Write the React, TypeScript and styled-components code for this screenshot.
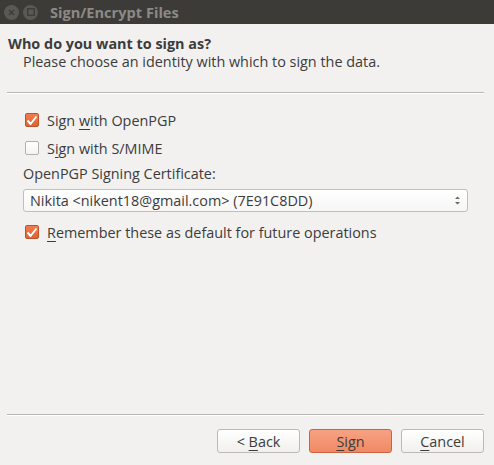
import React, { useState } from "react";
import styled, { createGlobalStyle } from "styled-components";

const GlobalStyle = createGlobalStyle`
	html, body {
		margin: 0;
		padding: 0;
		background: #f2f1f0;
	}
	body {
		font-family: "Open Sans", "DejaVu Sans", sans-serif;
		font-size: 14.4px;
		color: #3c3c3c;
	}
`;

const Window = styled.div`
	width: 494px;
	height: 465px;
	display: flex;
	flex-direction: column;
	background: #f2f1f0;
	overflow: hidden;
`;

const TitleBar = styled.div`
	height: 24px;
	flex: none;
	display: flex;
	align-items: center;
	gap: 4px;
	padding-left: 4px;
	background: #3c3b37;
`;

const WinButton = styled.div`
	width: 15px;
	height: 15px;
	border-radius: 50%;
	background: #5a5955;
	display: flex;
	align-items: center;
	justify-content: center;
`;

const Title = styled.div`
	margin-left: 8px;
	font-weight: bold;
	font-size: 14.6px;
	color: #8c8a85;
`;

const Header = styled.div`
	padding: 11px 8px 0 8px;
	height: 58px;
	box-sizing: border-box;
`;

const Heading = styled.div`
	font-weight: bold;
	line-height: 18px;
`;

const SubHeading = styled.div`
	padding-left: 15px;
	line-height: 18px;
`;

const Separator = styled.div`
	margin: ${(p: { top: number }) => p.top}px 10px 0 7px;
	height: 1px;
	background: #b9b7b3;
	border-bottom: 1px solid #ffffff;
	flex: none;
`;

const Body = styled.div`
	flex: 1;
	padding: 12px 26px 0 23px;
	display: flex;
	flex-direction: column;
`;

const CheckRow = styled.label`
	display: flex;
	align-items: center;
	gap: 8px;
	height: 28px;
	padding-left: 2px;
`;

const Box = styled.span<{ checked: boolean }>`
	width: 14px;
	height: 14px;
	box-sizing: border-box;
	border-radius: 2px;
	display: flex;
	align-items: center;
	justify-content: center;
	border: 1px solid ${p => (p.checked ? "#b8532e" : "#b4b1ac")};
	background: ${p => (p.checked ? "linear-gradient(#f27d4e, #e3622f)" : "linear-gradient(#ffffff, #f4f3f1)")};
`;

const Mn = styled.span`
	text-decoration: underline;
	text-underline-offset: 3px;
	text-decoration-thickness: 1px;
`;

const FieldLabel = styled.div`
	height: 25px;
	line-height: 22px;
	margin-top: 1px;
`;

const Combo = styled.div`
	height: 23px;
	margin-top: 1px;
	margin-bottom: 6px;
	box-sizing: border-box;
	display: flex;
	align-items: center;
	justify-content: space-between;
	padding: 0 6px 0 6px;
	border: 1px solid #c2beb8;
	border-radius: 3px;
	background: linear-gradient(#ffffff, #f7f6f5);
`;

const Spacer = styled.div`
	flex: 1;
`;

const Footer = styled.div`
	display: flex;
	justify-content: flex-end;
	gap: 9px;
	padding: 13px 10px 12px 0;
`;

const Button = styled.button<{ primary?: boolean }>`
	width: 83px;
	height: 24px;
	box-sizing: border-box;
	font-family: inherit;
	font-size: 14.4px;
	color: #3c3c3c;
	border-radius: 3px;
	border: 1px solid ${p => (p.primary ? "#c9643f" : "#bdb9b3")};
	background: ${p => (p.primary ? "linear-gradient(#f7a282, #f08965)" : "linear-gradient(#ffffff, #f1f0ee)")};
	padding: 0;
`;

const Check = () => (
	<svg width="12" height="11" viewBox="0 0 12 11">
		<path d="M1.5 5.5 L4.5 9 L10.5 1.5" fill="none" stroke="#ffffff" strokeWidth="2" />
	</svg>
);

const CheckBox = ({ checked, onClick, children }: { checked: boolean; onClick: () => void; children: React.ReactNode }) => (
	<CheckRow onClick={onClick}>
		<Box checked={checked}>{checked && <Check />}</Box>
		<span>{children}</span>
	</CheckRow>
);

const App = () => {
	const [pgp, setPgp] = useState(true);
	const [smime, setSmime] = useState(false);
	const [remember, setRemember] = useState(true);

	return (
		<Window>
			<GlobalStyle />
			<TitleBar>
				<WinButton>
					<svg width="7" height="7" viewBox="0 0 7 7">
						<path d="M1 1 L6 6 M6 1 L1 6" stroke="#3c3b37" strokeWidth="1.3" />
					</svg>
				</WinButton>
				<WinButton>
					<svg width="8" height="8" viewBox="0 0 8 8">
						<rect x="0.75" y="0.75" width="6.5" height="6.5" fill="none" stroke="#3c3b37" strokeWidth="1.3" />
					</svg>
				</WinButton>
				<Title>Sign/Encrypt Files</Title>
			</TitleBar>
			<Header>
				<Heading>Who do you want to sign as?</Heading>
				<SubHeading>Please choose an identity with which to sign the data.</SubHeading>
			</Header>
			<Separator top={10} />
			<Body>
				<CheckBox checked={pgp} onClick={() => setPgp(!pgp)}>
					Sign <Mn>w</Mn>ith OpenPGP
				</CheckBox>
				<CheckBox checked={smime} onClick={() => setSmime(!smime)}>
					S<Mn>i</Mn>gn with S/MIME
				</CheckBox>
				<FieldLabel>OpenPGP Signing Certificate:</FieldLabel>
				<Combo>
					<span>Nikita &lt;nikent18@gmail.com&gt; (7E91C8DD)</span>
					<svg width="7" height="11" viewBox="0 0 7 11">
						<path d="M1 4 L3.5 1.5 L6 4 Z M1 7 L3.5 9.5 L6 7 Z" fill="#6b6964" />
					</svg>
				</Combo>
				<CheckBox checked={remember} onClick={() => setRemember(!remember)}>
					<Mn>R</Mn>emember these as default for future operations
				</CheckBox>
				<Spacer />
			</Body>
			<Separator top={0} />
			<Footer>
				<Button>
					&lt; <Mn>B</Mn>ack
				</Button>
				<Button primary>
					<Mn>S</Mn>ign
				</Button>
				<Button>
					<Mn>C</Mn>ancel
				</Button>
			</Footer>
		</Window>
	);
};

export default App;
